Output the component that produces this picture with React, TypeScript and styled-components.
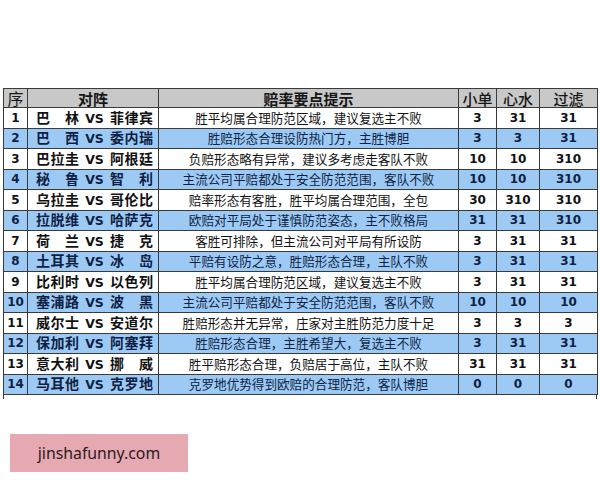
import React from 'react'
import styled, { createGlobalStyle } from 'styled-components'

const GlobalStyle = createGlobalStyle`
  body {
    margin: 0;
    background: #ffffff;
    font-family: "Noto Sans CJK SC", "Liberation Sans", sans-serif;
  }
`

const blue = '#9dcaf4'
const headGray = '#c8c8c8'
const line = '#3a3a3a'

type Match = {
  home: string
  away: string
  tip: string
  single: string
  heart: string
  filter: string
}

const matches: Match[] = [
  { home: '巴林', away: '菲律宾', tip: '胜平均属合理防范区域，建议复选主不败', single: '3', heart: '31', filter: '31' },
  { home: '巴西', away: '委内瑞', tip: '胜赔形态合理设防热门方，主胜博胆', single: '3', heart: '3', filter: '31' },
  { home: '巴拉圭', away: '阿根廷', tip: '负赔形态略有异常，建议多考虑走客队不败', single: '10', heart: '10', filter: '310' },
  { home: '秘鲁', away: '智利', tip: '主流公司平赔都处于安全防范范围，客队不败', single: '10', heart: '10', filter: '310' },
  { home: '乌拉圭', away: '哥伦比', tip: '赔率形态有客胜，胜平均属合理范围，全包', single: '30', heart: '310', filter: '310' },
  { home: '拉脱维', away: '哈萨克', tip: '欧赔对平局处于谨慎防范姿态，主不败格局', single: '31', heart: '31', filter: '310' },
  { home: '荷兰', away: '捷克', tip: '客胜可排除，但主流公司对平局有所设防', single: '3', heart: '31', filter: '31' },
  { home: '土耳其', away: '冰岛', tip: '平赔有设防之意，胜赔形态合理，主队不败', single: '3', heart: '31', filter: '31' },
  { home: '比利时', away: '以色列', tip: '胜平均属合理防范区域，建议复选主不败', single: '3', heart: '31', filter: '31' },
  { home: '塞浦路', away: '波黑', tip: '主流公司平赔都处于安全防范范围，客队不败', single: '10', heart: '10', filter: '10' },
  { home: '威尔士', away: '安道尔', tip: '胜赔形态并无异常，庄家对主胜防范力度十足', single: '3', heart: '3', filter: '3' },
  { home: '保加利', away: '阿塞拜', tip: '胜赔形态合理，主胜希望大，复选主不败', single: '3', heart: '31', filter: '31' },
  { home: '意大利', away: '挪威', tip: '胜平赔形态合理，负赔居于高位，主队不败', single: '31', heart: '31', filter: '31' },
  { home: '马耳他', away: '克罗地', tip: '克罗地优势得到欧赔的合理防范，客队博胆', single: '0', heart: '0', filter: '0' },
]

const Page = styled.div`
  width: 600px;
  height: 480px;
  padding: 88px 0 0 3px;
  box-sizing: border-box;
`

const Table = styled.table`
  width: 594px;
  border-collapse: collapse;
  table-layout: fixed;
`

const HeadRow = styled.tr`
  height: 19px;
  background: ${headGray};
`

const Row = styled.tr<{ $blue: boolean }>`
  height: 20.5px;
  background: ${(p) => (p.$blue ? blue : '#ffffff')};
  color: ${(p) => (p.$blue ? '#0e1f45' : '#111111')};
`

const Th = styled.th<{ $size?: number; $weight?: number }>`
  border: 1px solid ${line};
  padding: 0;
  font-size: ${(p) => p.$size ?? 15}px;
  font-weight: ${(p) => p.$weight ?? 700};
  line-height: 17px;
  color: #161616;
  text-align: center;
`

const Cell = styled.td`
  border: 1px solid ${line};
  padding: 0;
  text-align: center;
  vertical-align: middle;
`

const NumCell = styled(Cell)`
  font-family: "DejaVu Sans", "Liberation Sans", sans-serif;
  font-size: 12px;
  font-weight: 700;
  line-height: 16px;
`

const TipCell = styled(Cell)`
  font-size: 12.6px;
  line-height: 16px;
  white-space: nowrap;
  overflow: hidden;
`

const Versus = styled.div`
  display: grid;
  grid-template-columns: 43px 1fr 43px;
  align-items: baseline;
  padding: 0 5px 0 8px;
  font-size: 14px;
  font-weight: 700;
  line-height: 16px;
`

const Team = styled.span`
  text-align: justify;
  text-align-last: justify;
`

const Vs = styled.span`
  font-family: "DejaVu Sans", "Liberation Sans", sans-serif;
  font-size: 12.5px;
  font-weight: 700;
  text-align: center;
`

const Stub = styled.div`
  width: 594px;
  height: 4px;
  box-sizing: border-box;
  border-left: 1px solid ${line};
  border-right: 1px solid ${line};
`

const Stamp = styled.div`
  margin: 35px 0 0 7px;
  width: 178px;
  height: 38px;
  background: #e6a9b1;
  display: flex;
  align-items: center;
  justify-content: center;
  font-family: "Noto Sans", "Liberation Sans", sans-serif;
  font-size: 15.8px;
  color: #2a1a1e;
`

export default function App() {
  return (
    <>
      <GlobalStyle />
      <Page>
        <Table>
          <colgroup>
            <col style={{ width: 24 }} />
            <col style={{ width: 131 }} />
            <col style={{ width: 300 }} />
            <col style={{ width: 38 }} />
            <col style={{ width: 43 }} />
            <col style={{ width: 58 }} />
          </colgroup>
          <thead>
            <HeadRow>
              <Th $size={16} $weight={400}>序</Th>
              <Th>对阵</Th>
              <Th>赔率要点提示</Th>
              <Th $weight={500}>小单</Th>
              <Th $weight={500}>心水</Th>
              <Th $weight={500}>过滤</Th>
            </HeadRow>
          </thead>
          <tbody>
            {matches.map((m, i) => (
              <Row key={i} $blue={i % 2 === 1}>
                <NumCell>{i + 1}</NumCell>
                <Cell>
                  <Versus>
                    <Team>{m.home}</Team>
                    <Vs>VS</Vs>
                    <Team>{m.away}</Team>
                  </Versus>
                </Cell>
                <TipCell>{m.tip}</TipCell>
                <NumCell>{m.single}</NumCell>
                <NumCell>{m.heart}</NumCell>
                <NumCell>{m.filter}</NumCell>
              </Row>
            ))}
          </tbody>
        </Table>
        <Stub />
        <Stamp>jinshafunny.com</Stamp>
      </Page>
    </>
  )
}
